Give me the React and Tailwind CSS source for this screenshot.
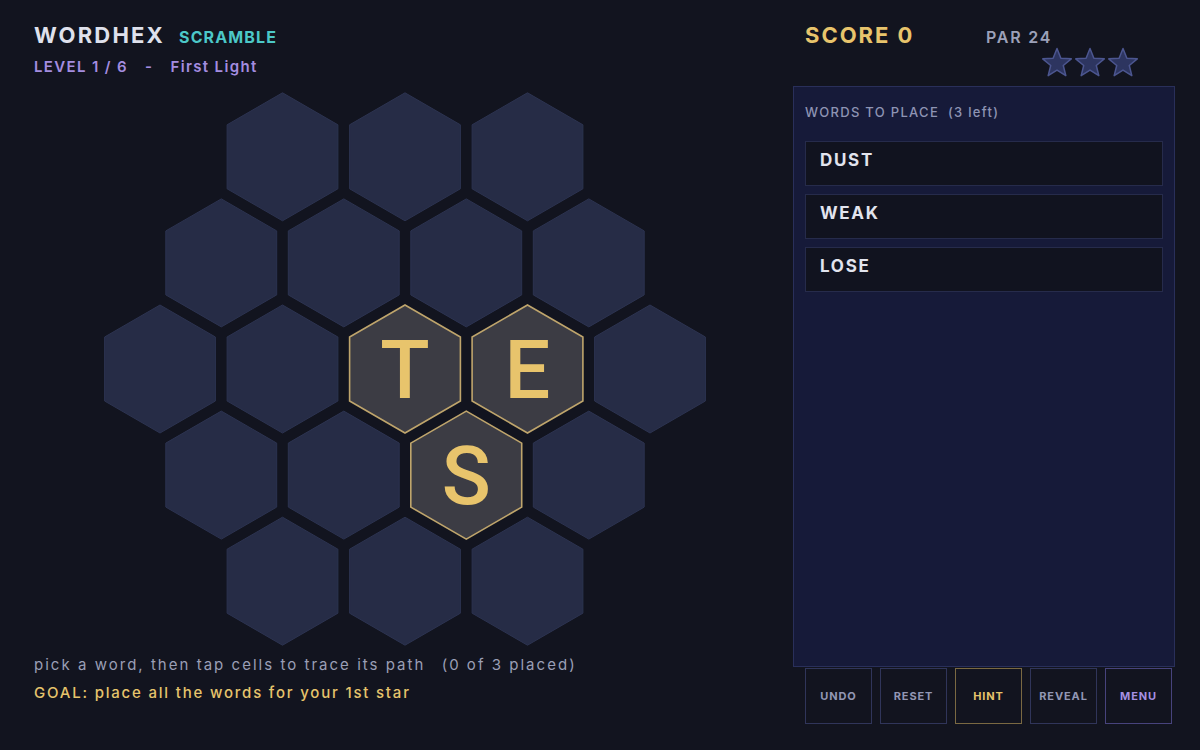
import React from "react";

const R = 64;
const DX = 122.5;
const DY = 106.1;
const CX = 315;
const CY = 281;

const placed = {
  "0,2": "T",
  "0,3": "E",
  "1,2": "S",
};

function hexPoints(x, y) {
  const pts = [];
  for (let i = 0; i < 6; i++) {
    const a = ((-90 + i * 60) * Math.PI) / 180;
    pts.push(`${(x + R * Math.cos(a)).toFixed(1)},${(y + R * Math.sin(a)).toFixed(1)}`);
  }
  return pts.join(" ");
}

function Board() {
  const cells = [];
  for (let r = -2; r <= 2; r++) {
    const n = 5 - Math.abs(r);
    for (let c = 0; c < n; c++) {
      const x = CX + (c - (n - 1) / 2) * DX;
      const y = CY + r * DY;
      cells.push({ key: `${r},${c}`, x, y, letter: placed[`${r},${c}`] });
    }
  }
  return (
    <svg width="630" height="560" viewBox="0 0 630 560" className="block ml-[56px] mt-[11px]">
      {cells.map((cell) =>
        cell.letter ? (
          <g key={cell.key}>
            <polygon points={hexPoints(cell.x, cell.y)} fill="#3c3c44" stroke="#bfa56c" strokeWidth="1.6" />
            <text
              x={cell.x}
              y={cell.y + 29}
              textAnchor="middle"
              fontFamily="Roboto, 'Liberation Sans', sans-serif"
              fontWeight="500"
              fontSize="81"
              fill="#e8c46c"
            >
              {cell.letter}
            </text>
          </g>
        ) : (
          <polygon key={cell.key} points={hexPoints(cell.x, cell.y)} fill="#262c46" stroke="#2c3350" strokeWidth="1" />
        )
      )}
    </svg>
  );
}

function Star() {
  const pts = [];
  for (let i = 0; i < 10; i++) {
    const rad = i % 2 === 0 ? 15 : 6.6;
    const a = ((-90 + i * 36) * Math.PI) / 180;
    pts.push(`${(16 + rad * Math.cos(a)).toFixed(2)},${(16.5 + rad * Math.sin(a)).toFixed(2)}`);
  }
  return (
    <svg width="32" height="31" viewBox="0 0 32 31">
      <polygon points={pts.join(" ")} fill="#2d3560" stroke="#4c5690" strokeWidth="1.5" strokeLinejoin="round" />
    </svg>
  );
}

const words = ["DUST", "WEAK", "LOSE"];

const buttons = [
  { label: "UNDO", cls: "border-[#30355a] text-[#9297b4]" },
  { label: "RESET", cls: "border-[#30355a] text-[#9297b4]" },
  { label: "HINT", cls: "border-[#7a6942] text-[#e6c46c]" },
  { label: "REVEAL", cls: "border-[#30355a] text-[#9297b4]" },
  { label: "MENU", cls: "border-[#47437c] text-[#a690e2]" },
];

export default function App() {
  return (
    <div
      className="w-[1200px] h-[750px] bg-[#12141f] flex overflow-hidden"
      style={{ fontFamily: "Inter, 'DejaVu Sans', sans-serif" }}
    >
      <div className="w-[793px] pl-[34px] pt-[21px] flex flex-col">
        <div className="flex items-baseline h-[28px] leading-[28px]">
          <span className="text-[22px] font-bold tracking-[0.1em] text-[#dfe1ec]">WORDHEX</span>
          <span className="ml-[14px] text-[16px] font-bold tracking-[0.07em] text-[#4cc8c8]">SCRAMBLE</span>
        </div>
        <div className="mt-[8px] h-[20px] leading-[20px] text-[15px] font-semibold tracking-[0.09em] text-[#a48de0]">
          LEVEL 1 / 6 <span className="mx-[12px]">-</span> First Light
        </div>
        <Board />
        <div className="mt-[6px] h-[22px] leading-[22px] text-[15px] tracking-[0.135em] text-[#9a9fb6]">
          pick a word, then tap cells to trace its path <span className="ml-[10px]">(0 of 3 placed)</span>
        </div>
        <div className="mt-[6px] h-[22px] leading-[22px] text-[15px] font-medium tracking-[0.12em] text-[#e6c46c]">
          GOAL: place all the words for your 1st star
        </div>
      </div>

      <div className="w-[382px] flex flex-col">
        <div className="h-[86px] flex">
          <div className="ml-[12px] mt-[21px] h-[28px] leading-[28px] text-[22px] font-bold tracking-[0.09em] text-[#e8c46c]">
            SCORE 0
          </div>
          <div className="ml-auto mr-[36px] w-[153px] flex flex-col">
            <div className="mt-[26px] h-[22px] leading-[22px] text-[16px] font-semibold tracking-[0.11em] text-[#9ca1b9]">
              PAR 24
            </div>
            <div className="flex justify-end gap-[1px] -mt-[1px]">
              <Star />
              <Star />
              <Star />
            </div>
          </div>
        </div>
        <div className="flex-1 bg-[#161a39] border border-[#292f5a] px-[11px]">
          <div className="mt-[15px] h-[20px] leading-[20px] text-[13px] font-medium tracking-[0.1em] text-[#8e94b4]">
            WORDS TO PLACE <span className="ml-[4px]">(3 left)</span>
          </div>
          <div className="mt-[19px] flex flex-col gap-[8px]">
            {words.map((w) => (
              <div
                key={w}
                className="h-[45px] bg-[#11131f] border border-[#262b4b] pl-[14px] flex items-center pb-[6px] text-[17px] font-bold tracking-[0.1em] text-[#e2e4ee]"
              >
                {w}
              </div>
            ))}
          </div>
        </div>
        <div className="h-[57px] mb-[26px] flex gap-[8px] pl-[12px]">
          {buttons.map((b) => (
            <div
              key={b.label}
              className={`w-[67px] h-[56px] mt-[1px] border flex items-center justify-center text-[11px] font-bold tracking-[0.08em] ${b.cls}`}
            >
              {b.label}
            </div>
          ))}
        </div>
      </div>
    </div>
  );
}
